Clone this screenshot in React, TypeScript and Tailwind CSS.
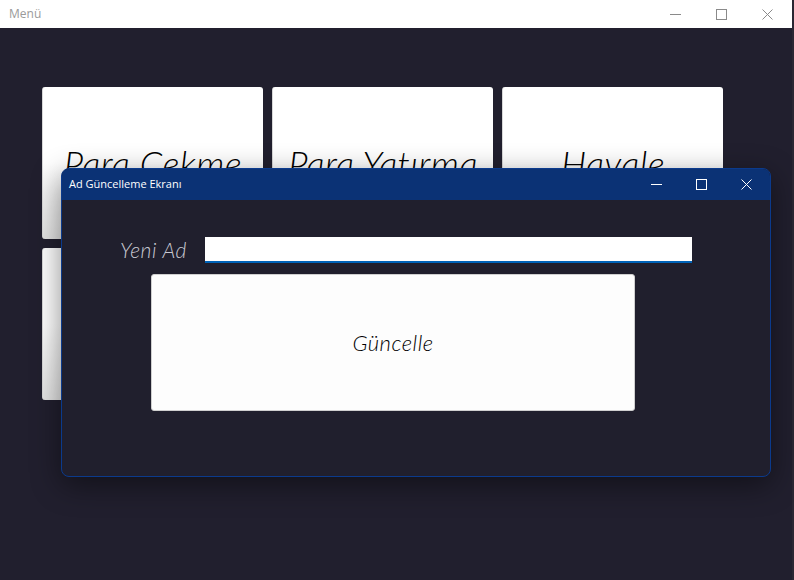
import React from "react";

const cards = ["Para Çekme", "Para Yatırma", "Havale", "", "", ""];

const WinControls = ({ color, gap }: { color: string; gap: string }) => (
  <div className={`flex items-center ${gap}`} style={{ color }}>
    <svg width="11" height="11" viewBox="0 0 11 11">
      <path d="M0 5.5h11" stroke="currentColor" strokeWidth="1" />
    </svg>
    <svg width="11" height="11" viewBox="0 0 11 11">
      <rect x="0.5" y="0.5" width="10" height="10" fill="none" stroke="currentColor" strokeWidth="1" />
    </svg>
    <svg width="11" height="11" viewBox="0 0 11 11">
      <path d="M0.5 0.5l10 10M10.5 0.5l-10 10" stroke="currentColor" strokeWidth="1" />
    </svg>
  </div>
);

const App = () => {
  return (
    <div className="relative w-[794px] h-[580px] overflow-hidden bg-[#2a2733] flex font-['Open_Sans',sans-serif]">
      {/* main window */}
      <div className="w-[792px] h-full flex flex-col bg-[#211f2e]">
        <div className="h-[28px] bg-white flex items-center justify-between pl-[9px] pr-[19px]">
          <span className="text-[12px] text-[#9a9a9a]">Menü</span>
          <WinControls color="#8a8a8a" gap="gap-[35px]" />
        </div>
        <div className="pt-[59px] pl-[42px]">
          <div className="grid grid-cols-[221px_221px_221px] grid-rows-[152px_152px] gap-[9px]">
            {cards.map((c, i) => (
              <div
                key={i}
                className="rounded-[3px] bg-gradient-to-b from-white from-50% to-[#e4e4e4] border-l border-[#d8d8d8] flex items-center justify-center"
              >
                <span className="font-['Lato',sans-serif] italic font-light text-[36px] tracking-[0.5px] text-black">{c}</span>
              </div>
            ))}
          </div>
        </div>
      </div>

      {/* dialog */}
      <div className="absolute left-[61px] top-[168px] w-[710px] h-[309px] rounded-[8px] border border-[#0b3a8c] bg-[#201f2d] shadow-[0_8px_30px_rgba(0,0,0,0.45)] flex flex-col overflow-hidden">
        <div className="h-[31px] bg-[#0b3275] flex items-center justify-between pl-[7px] pr-[18px] shrink-0">
          <span className="text-[11px] text-white">Ad Güncelleme Ekranı</span>
          <WinControls color="#ffffff" gap="gap-[34px]" />
        </div>
        <div className="flex flex-col pt-[37px]">
          <div className="flex items-center h-[26px]">
            <div className="w-[125px] text-right font-['Lato',sans-serif] italic font-light text-[21px] leading-[26px] tracking-[0.6px] text-[#c9c9d2]">
              Yeni Ad
            </div>
            <div className="ml-[18px] w-[487px] h-[26px] bg-white border-b-2 border-[#0063b8]" />
          </div>
          <div className="ml-[89px] mt-[11px] w-[484px] h-[137px] bg-[#fdfdfd] border border-[#cfcfcf] rounded-[3px] flex items-center justify-center">
            <span className="font-['Lato',sans-serif] italic font-light text-[22px] tracking-[0.5px] text-black">Güncelle</span>
          </div>
        </div>
      </div>
    </div>
  );
};

export default App;
